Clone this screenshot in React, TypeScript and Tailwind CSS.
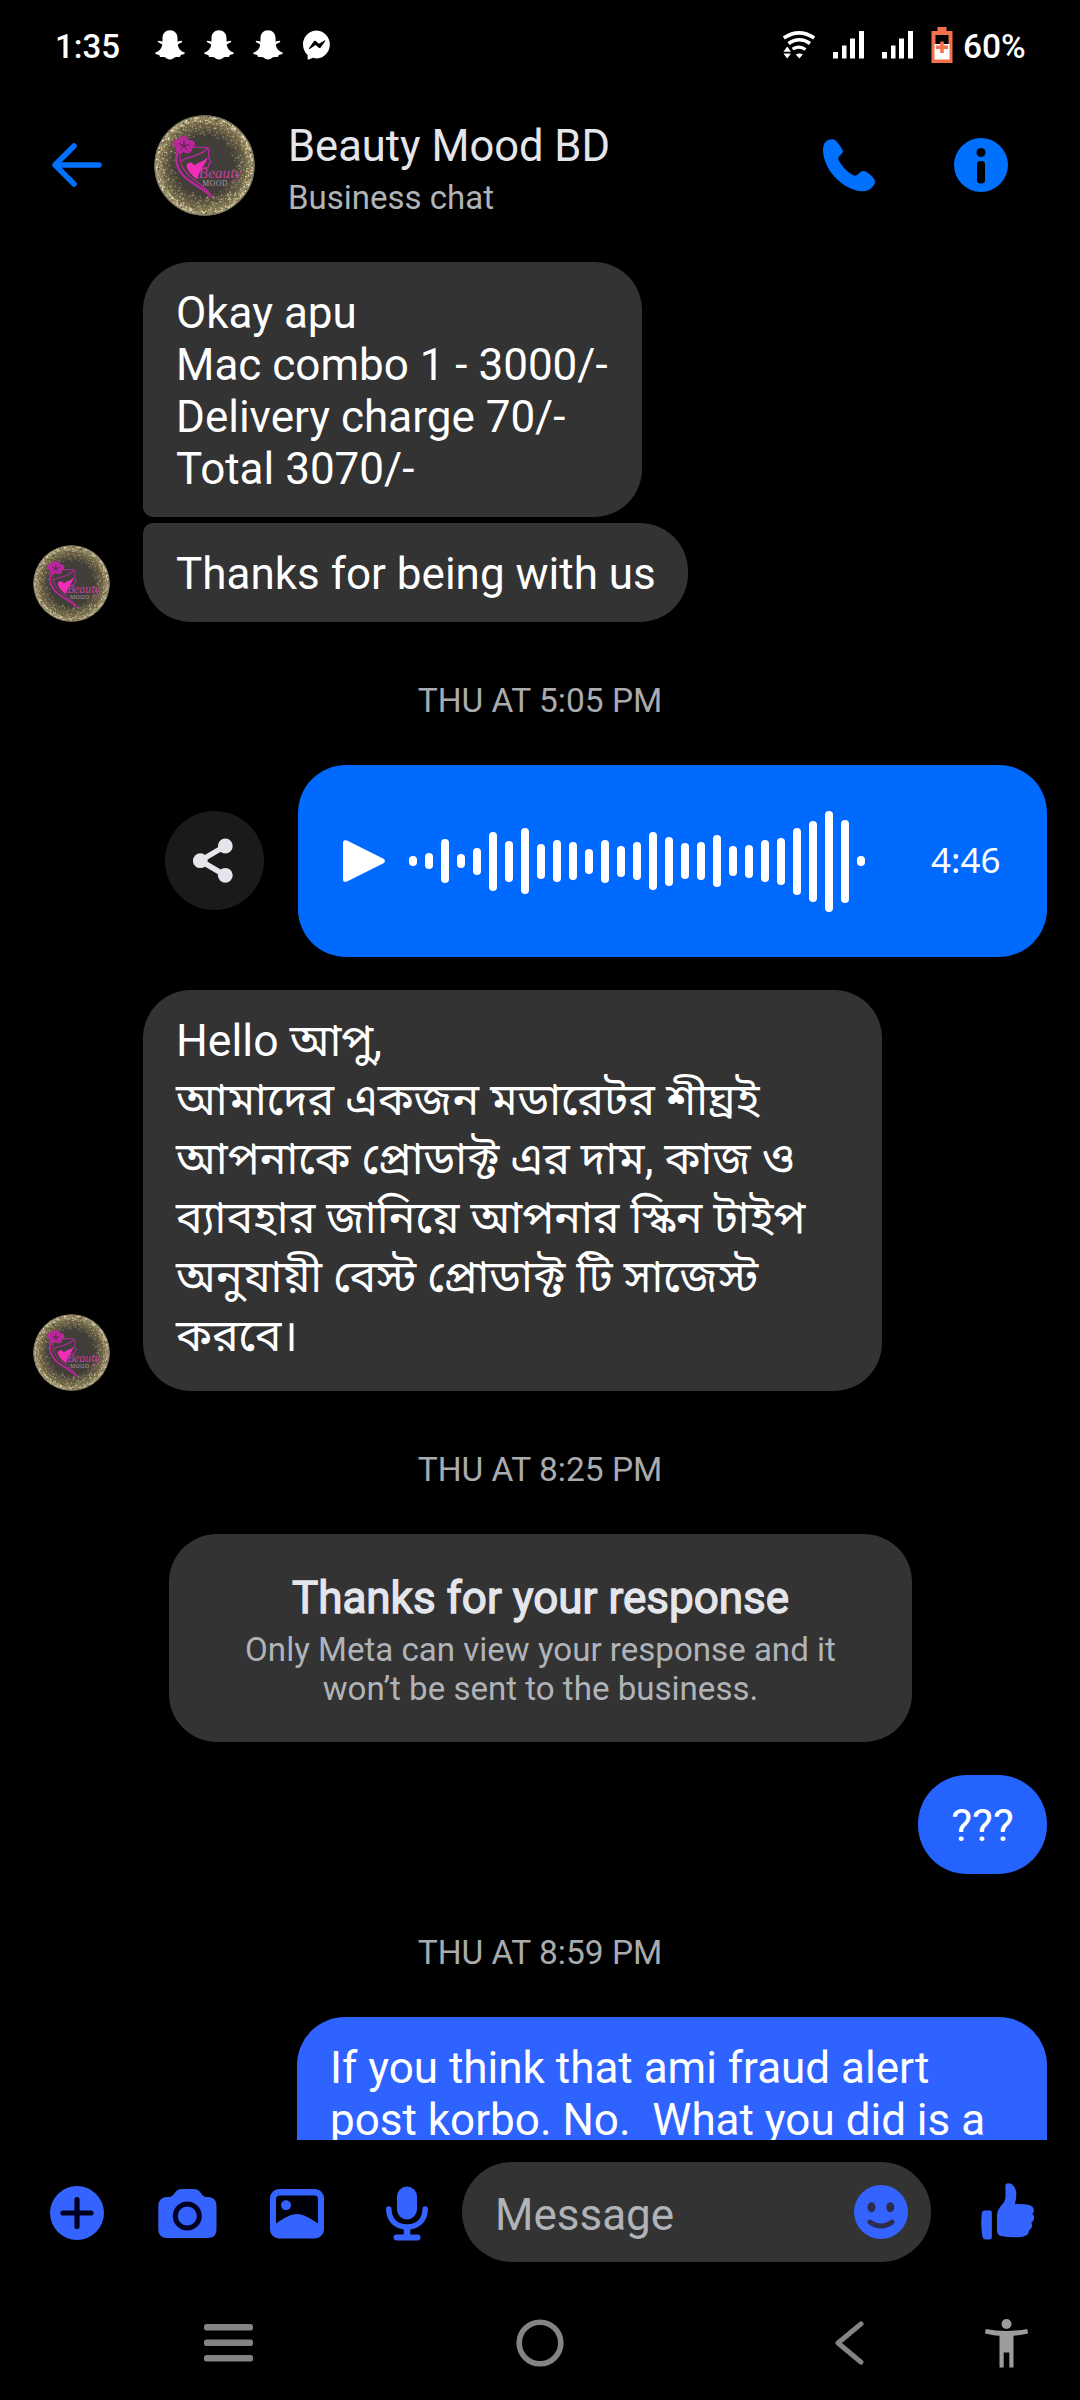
import type { ReactNode } from "react";

const WAVE = [10, 16, 44, 14, 27, 59, 41, 66, 35, 42, 38, 25, 43, 31, 38, 58, 49, 36, 38, 52, 30, 33, 42, 47, 67, 81, 101, 83, 10];

const BENGALI_LINES = [
  "Hello আপু,",
  "আমাদের একজন মডারেটর শীঘ্রই",
  "আপনাকে প্রোডাক্ট এর দাম, কাজ ও",
  "ব্যাবহার জানিয়ে আপনার স্কিন টাইপ",
  "অনুযায়ী বেস্ট প্রোডাক্ট টি সাজেস্ট",
  "করবে।",
];

/* Deterministic glitter specks for the avatar rim. */
const GLITTER_COLORS = ["#fff6cf", "#d8c691", "#8f7d4c", "#fffdf0", "#4b4029", "#cdbd8c"];
const GLITTER = Array.from({ length: 1300 }, (_, i) => {
  const a = i * 2.39996;
  const h = Math.abs(Math.sin(i * 12.9898) * 43758.5453) % 1;
  const k = Math.abs(Math.sin(i * 78.233) * 12543.123) % 1;
  const r = 48.5 - h * h * 19;
  return { x: 55 + r * Math.cos(a), y: 55 + r * Math.sin(a), r: 0.4 + k * 0.55, c: GLITTER_COLORS[i % 6], o: 1 - h * 0.75 };
});

function Avatar({ className }: { className: string }) {
  return (
    <svg viewBox="4.5 4.5 101 101" className={className}>
      <defs>
        <radialGradient id="rim">
          <stop offset="0" stopColor="#3f3e3e" />
          <stop offset="0.6" stopColor="#423e37" />
          <stop offset="0.82" stopColor="#6b6144" />
          <stop offset="1" stopColor="#a89d78" />
        </radialGradient>
      </defs>
      <circle cx="55" cy="55" r="50" fill="url(#rim)" />
      {GLITTER.map((g, i) => (
        <circle key={i} cx={g.x} cy={g.y} r={g.r} fill={g.c} opacity={g.o} />
      ))}
      <circle cx="55" cy="55" r="49.6" fill="none" stroke="#77715f" strokeWidth="1.2" />
      <g fill="#b9279a">
        <ellipse cx="34" cy="30" rx="5" ry="4.5" />
        <ellipse cx="40.5" cy="34" rx="5" ry="4.5" />
        <ellipse cx="38" cy="39" rx="4.5" ry="4" />
        <ellipse cx="30.5" cy="39" rx="4.5" ry="4" />
        <ellipse cx="28" cy="33" rx="4.5" ry="4.2" />
      </g>
      <path d="M34.500 35.500V30M34.500 35.500L39.500 34M34.500 35.500L37.500 39.500M34.500 35.500L31 39M34.500 35.500L29.500 33" stroke="#5b2050" strokeWidth="1" />
      <g fill="none" stroke="#b9279a" strokeLinecap="round" strokeLinejoin="round">
        <path d="M28 43C24 52 30 64 41 71C50 77 58 81 62 86" strokeWidth="2.4" />
        <path d="M31 42C29 52 34 61 43 68C51 74 57 78 61 84" strokeWidth="1.2" />
        <path d="M42 36C48 38 54 36 59 37.500C61 42 57 44 60 49L61.500 52L59.500 53L58.500 57C55 57 52 57 50 62" strokeWidth="1.3" />
        <path d="M33 50C38 45 48 48 58 38" strokeWidth="1.5" />
      </g>
      <path d="M48 69C42 65 37 59 37 55C38 51 43 51 45 55C49 51 53 52 58 47C57 54 50 57 48 69Z" fill="#f12db8" />
      <text x="49" y="67" textLength="43" lengthAdjust="spacingAndGlyphs" fill="#c23f9f" className="font-['Liberation_Serif'] text-[15px] italic">Beauty</text>
      <text x="53" y="75.500" textLength="25" fill="#a99aac" className="font-['Liberation_Serif'] text-[7.500px]">MOOD</text>
    </svg>
  );
}

function Ghost() {
  return (
    <svg viewBox="0 0 30 30" className="h-[30px] w-[30px]" fill="#fff">
      <path d="M15 .3C10.600.3 7.500 3.500 7.500 8V11.500L3.600 10.800C2.600 10.700 2.500 11.700 3.300 12.200L7.300 14.500C6.700 18.500 4 21.500.4 22.600C-.2 23 .3 23.800 1.200 24.200L4.300 25L5 27.100L9 27C11 27.300 12.500 29.600 15 29.600S19 27.300 21 27L25 27.100L25.700 25L28.800 24.200C29.700 23.800 30.200 23 29.600 22.600C26 21.500 23.300 18.500 22.700 14.500L26.700 12.200C27.500 11.700 27.400 10.700 26.400 10.800L22.500 11.500V8C22.500 3.500 19.400.3 15 .3Z" />
    </svg>
  );
}

function Signal() {
  return (
    <svg viewBox="0 0 31 28" className="h-7 w-[31px]" fill="#fff">
      <rect x="0" y="21" width="5" height="6.500" />
      <rect x="9" y="14.500" width="4.500" height="13" />
      <rect x="17" y="7.500" width="5" height="20" />
      <rect x="26" y="0" width="5" height="27.500" />
    </svg>
  );
}

function StatusBar() {
  return (
    <div className="flex h-[90px] items-center pt-[2px] pl-[55px] font-medium text-white">
      <span className="w-[100px] text-[33px] leading-[39px]">1:35</span>
      <div className="-mt-[2px] flex items-center gap-[19px]">
        <Ghost />
        <Ghost />
        <Ghost />
        <svg viewBox="0 0 28 30" className="ml-[1px] h-[30px] w-7">
          <path d="M14 .5A14 14 0 0 0 0 14.500C0 19 2 22.500 4.600 25V28.700C4.600 29.500 5.200 29.800 5.900 29.500L10 27.800C11.300 28.200 12.600 28.400 14 28.400A14 14 0 0 0 14 .5Z" fill="#fff" />
          <path d="M6 18.200L10.800 11.300C11.300 10.600 12.200 10.500 12.800 11L16 13.700L21.500 10.400C22 10.100 22.500 10.700 22.100 11.200L17.700 17.400C17.200 18.100 16.300 18.200 15.700 17.700L12.600 15.100L6.700 18.900C6.200 19.200 5.700 18.700 6 18.200Z" fill="#000" />
        </svg>
      </div>
      <div className="-mt-[2px] ml-[452px] flex items-center">
        <svg viewBox="0 0 32 28" className="h-7 w-8" fill="none" stroke="#fff" strokeWidth="3.600">
          <path d="M.8 7Q16-3.200 31.200 7" />
          <path d="M5.500 12.500Q16.500 5 27 12.500" />
          <path d="M9.500 18Q16.500 13.800 22.500 18.500" strokeWidth="3.200" />
          <path d="M16.300 27.500L12.800 23.500Q16.300 21.500 19.800 23.500Z" fill="#fff" stroke="none" />
          <path d="M4.200 15.500L8 20.800H.4ZM4.200 27.500L.4 22.500H8Z" fill="#fff" stroke="none" />
        </svg>
        <div className="ml-[18px]"><Signal /></div>
        <div className="ml-[18px]"><Signal /></div>
        <svg viewBox="0 0 22 36" className="ml-[18px] h-9 w-[22px]">
          <path d="M6.500 0H15.500V4H21.500V36H.5V4H6.500Z" fill="#f4704b" />
          <rect x="4.500" y="8" width="13" height="24" fill="#000" />
          <rect x="3.500" y="17" width="15" height="15.500" fill="#fff" />
          <path d="M9.200 14.500H12.800V18.500H17V22H12.800V26H9.200V22H5V18.500H9.200Z" fill="#f4704b" />
        </svg>
      </div>
      <span className="ml-[10px] text-[33.500px] leading-[39px]">60%</span>
    </div>
  );
}

function Header() {
  return (
    <header className="flex h-[150px] items-center">
      <svg viewBox="0 0 50 44" className="ml-[52px] h-11 w-[50px]" fill="none" stroke="#0070ff" strokeWidth="5.500" strokeLinecap="round" strokeLinejoin="round">
        <path d="M22 3L3 22L22 41M4 22H47" />
      </svg>
      <Avatar className="ml-[52px] h-[101px] w-[101px]" />
      <div className="mt-[8px] ml-[33px] w-[535px]">
        <div className="text-[43.500px] leading-[52px] text-[#e4e6eb]">Beauty Mood BD</div>
        <div className="mt-[5px] text-[33px] leading-[39px] text-[#b0b3b8]">Business chat</div>
      </div>
      <svg viewBox="0 0 52 53" className="h-[53px] w-[52px]" fill="#0070ff">
        <path d="M5 1C8-.3 11-.2 13 1.800C15.500 4.500 18 8 19.600 11C20.300 12.500 19.800 13.600 19 14.500L16 17.500C15 18.700 15.200 20.200 16 21.800C19 27.500 23.500 32 28.800 35.600C30.500 36.800 32.500 37.200 34 36L37.500 33C39.300 31.600 41.600 31.900 43.500 33C46.500 34.900 49 37 51 39.800C52.500 42 52.200 44.500 50.500 46.800C47 51.500 42 53 36 52C17 48.500 1 30 0 12C-.1 7 1.500 2.500 5 1Z" />
      </svg>
      <svg viewBox="0 0 54 54" className="ml-[79px] h-[54px] w-[54px]">
        <circle cx="27" cy="27" r="27" fill="#0070ff" />
        <circle cx="27" cy="14.500" r="4.500" fill="#000" />
        <rect x="23" y="23" width="8" height="22.500" rx="3.500" fill="#000" />
      </svg>
    </header>
  );
}

function Timestamp({ children }: { children: ReactNode }) {
  return <div className="mt-[59px] mb-[45px] text-center text-[33.500px] leading-[39px] text-[#a9abae]">{children}</div>;
}

function Chat() {
  return (
    <main className="flex h-[1900px] flex-col overflow-hidden px-[33px] pt-[22px] text-[44px] leading-[52px] text-white">
      <div className="ml-[110px] h-[255px] w-[499px] shrink-0 rounded-[48px] rounded-bl-[10px] bg-[#333] pt-[25px] pl-[33px] whitespace-pre">
        {"Okay apu\nMac combo 1 - 3000/-\nDelivery charge 70/-\nTotal 3070/-"}
      </div>
      <div className="mt-[6px] flex items-end">
        <Avatar className="h-[77px] w-[77px]" />
        <div className="ml-[33px] h-[99px] w-[545px] rounded-[48px] rounded-tl-[10px] bg-[#333] pt-[25px] pl-[33px] whitespace-nowrap">Thanks for being with us</div>
      </div>
      <Timestamp>THU AT 5:05 PM</Timestamp>
      <div className="flex items-center justify-end">
        <svg viewBox="0 0 99 99" className="-mt-[2px] h-[99px] w-[99px]" fill="#e4e6eb">
          <circle cx="49.500" cy="49.500" r="49.500" fill="#1a1a1a" />
          <path d="M60.300 35L35.300 49.700L60.300 64.300" fill="none" stroke="#e4e6eb" strokeWidth="5.500" />
          <circle cx="60.300" cy="35" r="7.400" />
          <circle cx="35.300" cy="49.700" r="7.400" />
          <circle cx="60.300" cy="64.300" r="7.400" />
        </svg>
        <div className="ml-[34px] flex h-[192px] w-[749px] items-center rounded-[48px] bg-[#006aff] pl-[45px]">
          <svg viewBox="0 0 42 42" className="h-[42px] w-[42px]" fill="#fff">
            <path d="M0 3Q0-1 4 .6L40 18.500Q44 21 40 23.500L4 41.400Q0 43 0 39Z" />
          </svg>
          <div className="ml-[24px] flex items-center gap-2">
            {WAVE.map((h, i) => (
              <div key={i} className="w-2 rounded-full bg-white" style={{ height: h }} />
            ))}
          </div>
          <span className="-mt-[3px] ml-[66px] font-['Noto_Sans'] text-[35px] leading-[48px]">4:46</span>
        </div>
      </div>
      <div className="mt-[33px] flex items-end">
        <Avatar className="h-[77px] w-[77px]" />
        <div className="ml-[33px] h-[401px] w-[739px] rounded-[48px] bg-[#333] pt-[22px] pl-[33px] text-[44.600px] leading-[59px] whitespace-nowrap">
          {BENGALI_LINES.map((line) => (
            <div key={line}>{line}</div>
          ))}
        </div>
      </div>
      <Timestamp>THU AT 8:25 PM</Timestamp>
      <div className="ml-[136px] h-[208px] w-[743px] shrink-0 rounded-[48px] bg-[#333] pt-[38px] text-center">
        <div className="text-[#e4e6eb] [-webkit-text-stroke:1.300px_#e4e6eb]">Thanks for your response</div>
        <div className="mt-[6px] text-[33.100px] leading-[39px] text-[#b0b3b8]">
          Only Meta can view your response and it
          <br />
          won’t be sent to the business.
        </div>
      </div>
      <div className="mt-[33px] h-[99px] w-[129px] shrink-0 self-end rounded-[49px] bg-[#2563ff] pt-[25px] text-center">???</div>
      <Timestamp>THU AT 8:59 PM</Timestamp>
      <div className="h-[260px] w-[750px] shrink-0 self-end rounded-[48px] bg-[#2f63ff] pt-[25px] pl-[33px] whitespace-pre">
        {"If you think that ami fraud alert\npost korbo. No.  What you did is a"}
      </div>
    </main>
  );
}

function Composer() {
  return (
    <div className="mt-[22px] flex h-[100px] items-center">
      <svg viewBox="0 0 54 54" className="mt-[1px] ml-[50px] h-[54px] w-[54px]">
        <circle cx="27" cy="27" r="27" fill="#3563ff" />
        <path d="M27 13.500V40.500M13 27H41" stroke="#000020" strokeWidth="5.200" strokeLinecap="round" />
      </svg>
      <svg viewBox="0 0 59 50" className="mt-[3px] ml-[54px] h-[50px] w-[59px]" fill="#3563ff">
        <path d="M9 8H11C14 8 15.500 5.500 17.500 3C19 1 21 0 23.500 0H36C38.500 0 40.500 1 42 3C44 5.500 45.500 8 48.500 8H50C55.500 8 58.500 11.500 58.500 17V40C58.500 46 55.500 49 50 49H9C3.500 49 .3 46 .3 40V17C.3 11.500 3.500 8 9 8Z" />
        <circle cx="29.300" cy="27" r="12" fill="none" stroke="#000020" strokeWidth="5" />
      </svg>
      <svg viewBox="0 0 54 50" className="mt-[3px] ml-[53px] h-[50px] w-[54px]">
        <rect x="0" y="0" width="54" height="49.500" rx="9" fill="#3563ff" />
        <path d="M10 6.500H44Q48 6.500 48 10.500V34.500C40 29 33 25 27 25S14 29 6 34.500V10.500Q6 6.500 10 6.500Z" fill="#000008" />
        <circle cx="16" cy="16.300" r="5" fill="#3563ff" />
      </svg>
      <svg viewBox="0 0 42 55" className="mt-[2px] ml-[62px] h-[55px] w-[42px]" fill="none" stroke="#3563ff" strokeLinecap="round">
        <rect x="11" y="0.500" width="20" height="33" rx="10" fill="#3563ff" stroke="none" />
        <path d="M2.800 23C2.800 34 10 41 21 41S39.200 34 39.200 23" strokeWidth="5.500" />
        <path d="M21 42V50" strokeWidth="6.500" />
        <path d="M10.500 51.500H31.500" strokeWidth="6" />
      </svg>
      <div className="ml-[34px] flex h-[100px] w-[469px] items-center rounded-full bg-[#333] pl-[33px]">
        <span className="mt-[6px] w-[359px] text-[44px] leading-[52px] text-[#b0b3b8]">Message</span>
        <svg viewBox="0 0 54 54" className="h-[54px] w-[54px]">
          <circle cx="27" cy="27" r="27" fill="#3563ff" />
          <ellipse cx="17.500" cy="22.300" rx="4" ry="5" fill="#2b2d4e" />
          <ellipse cx="36.300" cy="22.300" rx="4" ry="5" fill="#2b2d4e" />
          <path d="M15.800 37Q27 45 38.200 37" fill="none" stroke="#2b2d4e" strokeWidth="4.800" strokeLinecap="round" />
        </svg>
      </div>
      <svg viewBox="0 0 54 57" className="-mt-[2px] ml-[50px] h-[57px] w-[54px]" fill="#3563ff">
        <path d="M3 27.500H9Q10.800 27.500 10.800 29.500V54.500Q10.800 56.500 9 56.500H4.500Q2 56.500 1.300 53C0 46 0 38 .8 30Q1.200 27.500 3 27.500Z" />
        <path d="M24.300 3C24.300 1 25.500.2 27 .2C32 .2 35.300 5 35.300 11C35.300 15 34.500 18 34 21.200C39 20.600 43 21 47 21.800C51.500 22.700 53.500 25.500 52.700 28.500C52.400 29.700 51.800 30.300 51.200 30.900C52.900 32 53.400 33.800 53 35.700C52.600 37.700 51.500 38.800 50.200 39.700C51.200 41 51.300 42.500 50.700 44.200C50.200 45.700 49.200 46.600 48 47.100C48.200 52.500 43 54.200 35 54.300C29 54.300 24 54 20 53C17.300 52.200 16 50.500 16 47.500V33C16 29.500 16.800 27.500 18.500 25C21 21.500 23.500 19.500 24.200 16C24.900 12 24.300 7 24.300 3Z" />
      </svg>
    </div>
  );
}

function NavBar() {
  return (
    <nav className="mt-[56px] flex h-[50px] items-center">
      <svg viewBox="0 0 49 38" className="ml-[204px] h-[38px] w-[49px]" fill="#848484">
        <rect y="0" width="49" height="6.500" rx="2.500" />
        <rect y="15.500" width="49" height="6.500" rx="2.500" />
        <rect y="31" width="49" height="6.500" rx="2.500" />
      </svg>
      <svg viewBox="0 0 48 48" className="ml-[263px] h-12 w-12">
        <circle cx="24" cy="24" r="20.800" fill="none" stroke="#848484" strokeWidth="5.600" />
      </svg>
      <svg viewBox="0 0 30 44" className="ml-[271px] h-11 w-[30px]" fill="none" stroke="#848484" strokeWidth="5" strokeLinecap="round" strokeLinejoin="round">
        <path d="M26 2.800L3 22L26 41.200" />
      </svg>
      <svg viewBox="0 0 43 49" className="ml-[120px] h-[49px] w-[43px]" fill="#9c9c9c">
        <circle cx="21.500" cy="5" r="5" />
        <path d="M.7 10C14 12.600 29 12.600 42.300 10L43 14.500C38 15.700 33.500 16.400 28.500 16.800V48.500H24.300V33.500H18.700V48.500H14.500V16.800C9.500 16.400 5 15.700 0 14.500Z" />
      </svg>
    </nav>
  );
}

export default function App() {
  return (
    <div className="h-[2400px] w-[1080px] overflow-hidden bg-black font-[Roboto,'Noto_Sans_Bengali',sans-serif]">
      <StatusBar />
      <Header />
      <Chat />
      <Composer />
      <NavBar />
    </div>
  );
}
